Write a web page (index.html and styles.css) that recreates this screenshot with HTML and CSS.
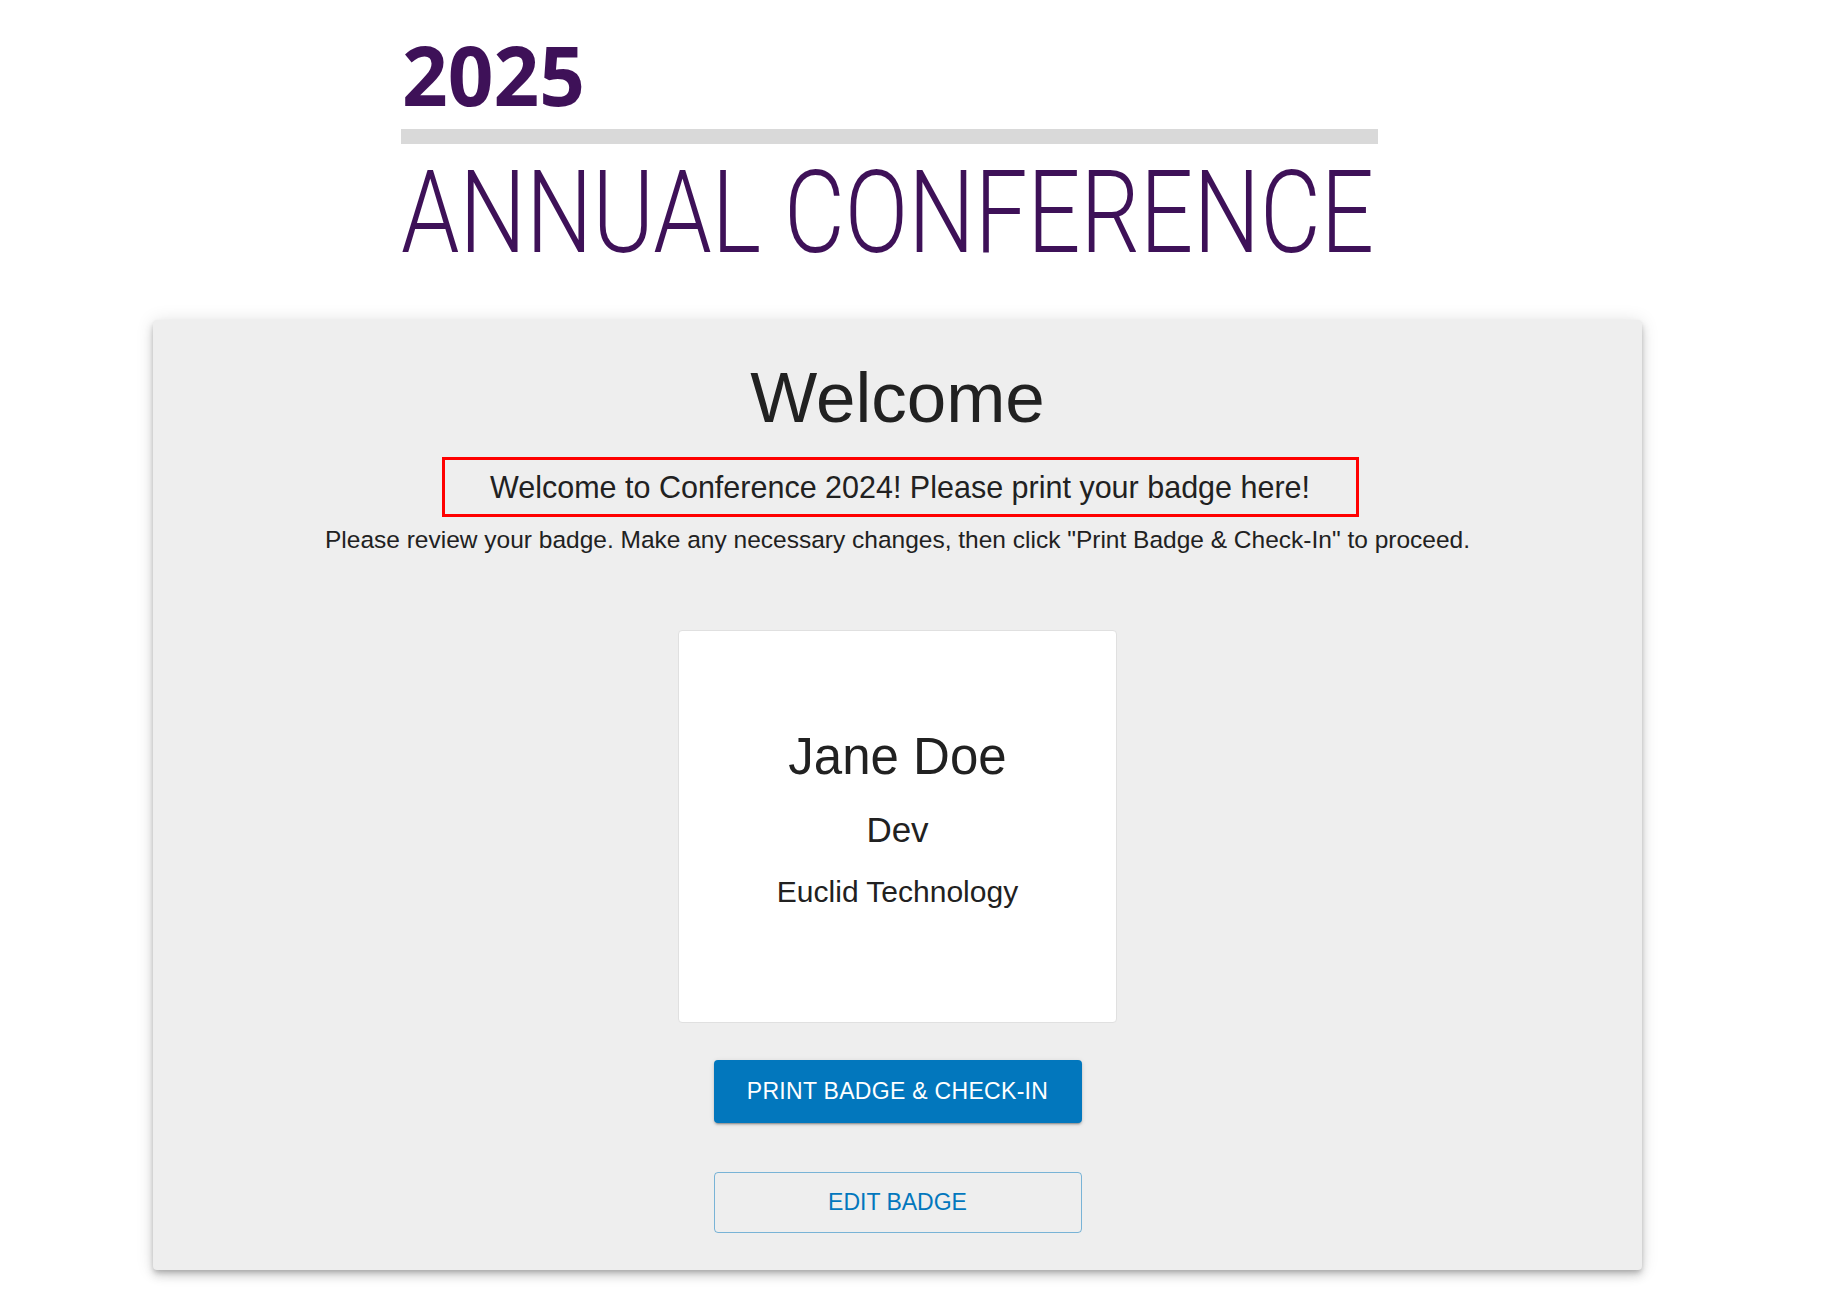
FILE: index.html
```html
<!DOCTYPE html>
<html lang="en">
  <head>
    <meta charset="UTF-8" />
    <meta name="viewport" content="width=device-width, initial-scale=1.0" />
    <title>Conference Check-In</title>
    <link rel="stylesheet" href="styles.css">
  </head>
  <body>
    <div class="page">
      <header class="logo">
        <svg class="logo-art" width="980" height="275" viewBox="0 0 980 275">
          <text class="logo-year" x="1" y="96" textLength="183" lengthAdjust="spacingAndGlyphs">2025</text>
          <rect x="0" y="119" width="977" height="15" fill="#d9d9d9" />
          <text class="logo-name" x="0" y="242" textLength="973" lengthAdjust="spacingAndGlyphs">ANNUAL CONFERENCE</text>
        </svg>
      </header>

      <main class="card">
        <h1 class="title">Welcome</h1>
        <div class="notice">Welcome to Conference 2024! Please print your badge here!</div>
        <p class="hint">Please review your badge. Make any necessary changes, then click "Print Badge &amp; Check-In" to proceed.</p>

        <div class="badge">
          <div class="badge-name">Jane Doe</div>
          <div class="badge-role">Dev</div>
          <div class="badge-company">Euclid Technology</div>
        </div>

        <button type="button" class="btn btn-primary">Print Badge &amp; Check-In</button>
        <button type="button" class="btn btn-outline">Edit Badge</button>
      </main>
    </div>
  </body>
</html>
```

FILE: styles.css
```css
body {
  margin: 0;
  background-color: #ffffff;
  font-family: "Liberation Sans", Arial, sans-serif;
  color: #212121;
}
.page {
  width: 1489px;
  margin-left: 153px;
  padding-top: 10px;
  padding-bottom: 20px;
}
.logo {
  padding-left: 248px;
}
.logo-art {
  display: block;
  overflow: visible;
}
.logo-year {
  font-family: "Open Sans", sans-serif;
  font-weight: 700;
  font-size: 83px;
  fill: #3e1158;
}
.logo-name {
  font-family: Roboto, sans-serif;
  font-weight: 300;
  font-size: 115px;
  fill: #3e1158;
}
.card {
  margin-top: 35px;
  padding: 35px 0 37px;
  display: flex;
  flex-direction: column;
  align-items: center;
  background-color: #eeeeee;
  border-radius: 4px;
  box-shadow: 0 3px 5px -1px rgba(0, 0, 0, 0.2), 0 6px 10px 0 rgba(0, 0, 0, 0.14),
    0 1px 18px 0 rgba(0, 0, 0, 0.12);
}
.title {
  margin: 0;
  font-size: 71px;
  line-height: 85px;
  font-weight: 400;
}
.notice {
  margin: 17px 0 0 6px;
  padding: 10px 46px 10px 45px;
  border: 3px solid #ff0000;
  font-size: 30.5px;
  line-height: 34px;
}
.hint {
  margin: 6px 0 0;
  font-size: 24.5px;
  line-height: 33px;
}
.badge {
  box-sizing: border-box;
  width: 439px;
  height: 393px;
  margin-top: 74px;
  padding-top: 95px;
  display: flex;
  flex-direction: column;
  align-items: center;
  background-color: #ffffff;
  border: 1px solid #e0e0e0;
  border-radius: 4px;
}
.badge-name {
  font-size: 51px;
  line-height: 61px;
}
.badge-role {
  margin-top: 22px;
  font-size: 35px;
  line-height: 42px;
}
.badge-company {
  margin-top: 23px;
  font-size: 30px;
  line-height: 36px;
}
.btn {
  display: flex;
  align-items: center;
  justify-content: center;
  width: 368px;
  padding: 0;
  font-family: "Liberation Sans", Arial, sans-serif;
  font-size: 23px;
  text-transform: uppercase;
  border-radius: 4px;
  cursor: pointer;
}
.btn-primary {
  height: 63px;
  margin-top: 37px;
  letter-spacing: 0.3px;
  color: #ffffff;
  background-color: #0277bd;
  border: none;
  box-shadow: 0 3px 1px -2px rgba(0, 0, 0, 0.2), 0 2px 2px 0 rgba(0, 0, 0, 0.14),
    0 1px 5px 0 rgba(0, 0, 0, 0.12);
}
.btn-primary:hover {
  background-color: #01579b;
}
.btn-outline {
  height: 61px;
  margin-top: 49px;
  color: #0277bd;
  background-color: transparent;
  border: 1px solid rgba(2, 119, 189, 0.5);
}
```
